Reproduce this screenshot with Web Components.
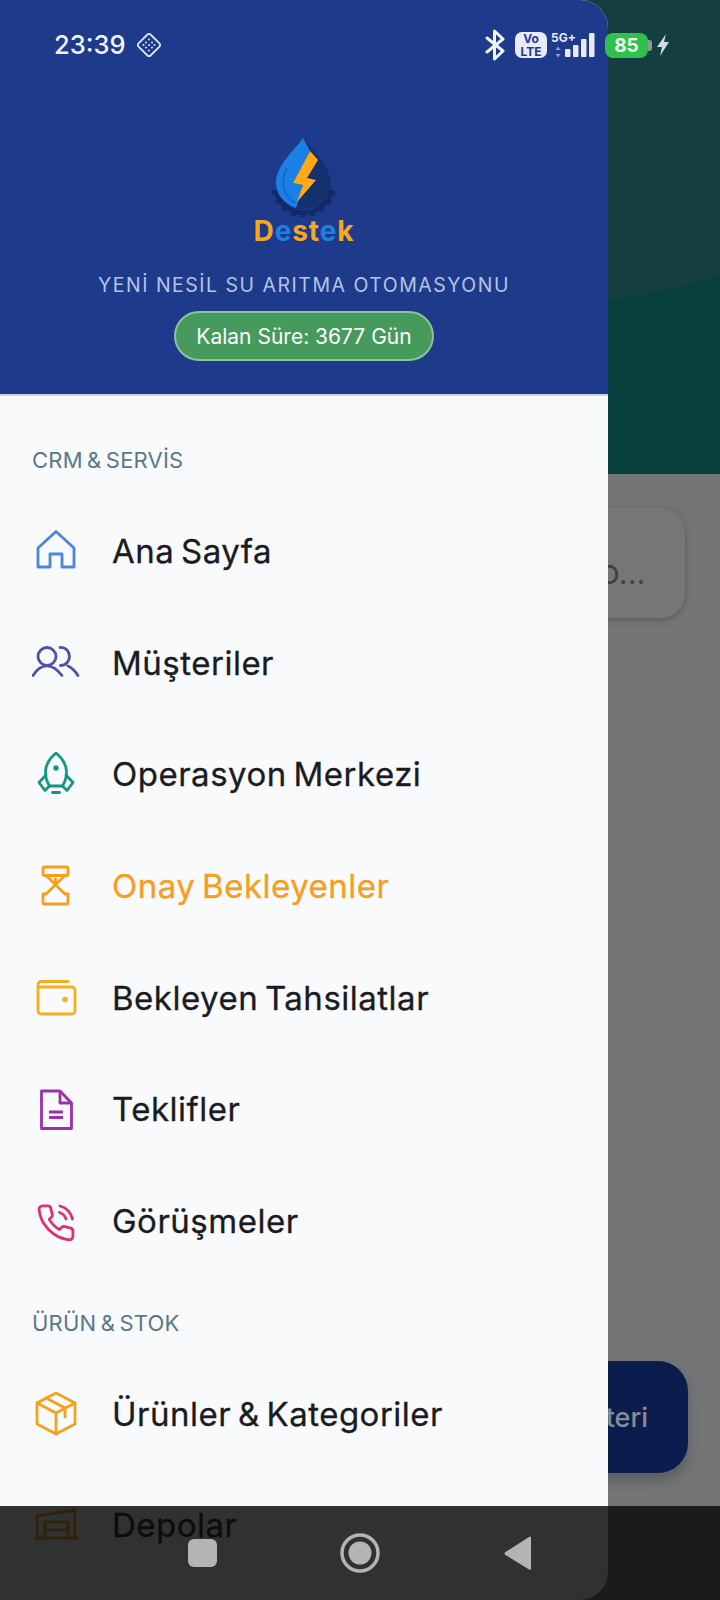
<!DOCTYPE html>
<html lang="tr">
<head>
<meta charset="utf-8">
<title>Destek</title>
<style>
  html, body { margin: 0; padding: 0; background: #747576; }
  body { font-family: "Inter", "Noto Sans", sans-serif; }
</style>
</head>
<body>

<app-screen>
  <back-page slot="page"></back-page>
  <side-drawer slot="drawer">
    <drawer-header slot="header"></drawer-header>

    <menu-section label="CRM &amp; SERVİS">
      <menu-item>
        <svg slot="icon" viewBox="0 0 48 48" fill="none" stroke="#4a86e0" stroke-width="2.8" stroke-linejoin="round"><path d="M6 40V21L24 4.5 42 21V40H30V27H18V40Z"/></svg>
        Ana Sayfa
      </menu-item>
      <menu-item>
        <svg slot="icon" viewBox="0 0 48 48" fill="none" stroke="#4a55a8" stroke-width="2.8" stroke-linecap="round"><circle cx="15" cy="17.500" r="9"/><path d="M1 36.500C5 30 10 26.800 15 26.800S25 30 30 36.500"/><path d="M28 8.500C34 8 37.500 12.500 37.500 17.500C37.500 22 34 26.500 28.500 26.500"/><path d="M36 27C40 29 43.500 32.500 46 36.500"/></svg>
        Müşteriler
      </menu-item>
      <menu-item>
        <svg slot="icon" viewBox="0 0 48 48" fill="none" stroke="#14967f" stroke-width="2.8" stroke-linecap="round" stroke-linejoin="round"><path d="M24 3C18 8 13.500 14 13.500 22C13.500 27 15 32 17.500 36H30.500C33 32 34.500 27 34.500 22C34.500 14 30 8 24 3Z"/><path d="M14 25L7 32.500L13 40.500L17.500 36"/><path d="M34 25L41 32.500L35 40.500L30.500 36"/><path d="M20.500 42.500H27.500"/><circle cx="24" cy="18" r="1.300" fill="#14967f"/></svg>
        Operasyon Merkezi
      </menu-item>
      <menu-item active>
        <svg slot="icon" viewBox="0 0 48 48" fill="none" stroke="#f59e1f" stroke-width="2.8" stroke-linejoin="round" stroke-linecap="round"><rect x="11" y="5" width="25" height="8.500" rx="1.500"/><path d="M14 13.500L33 32M33 13.500L14 32"/><path d="M23.500 17V23"/><path d="M14 32H11V40.500A1.500 1.500 0 0 0 12.500 42H34.500A1.500 1.500 0 0 0 36 40.500V32H33"/></svg>
        Onay Bekleyenler
      </menu-item>
      <menu-item>
        <svg slot="icon" viewBox="0 0 48 48" fill="none" stroke="#f2b01e" stroke-width="2.8" stroke-linejoin="round" stroke-linecap="round"><path d="M36 7.500H9A3 3 0 0 0 6 10.500V37A3 3 0 0 0 9 40H40A3 3 0 0 0 43 37V16A3 3 0 0 0 40 13H6"/><circle cx="33" cy="25.500" r="1.400" fill="#f2b01e"/></svg>
        Bekleyen Tahsilatlar
      </menu-item>
      <menu-item>
        <svg slot="icon" viewBox="0 0 48 48" fill="none" stroke="#9b30a8" stroke-width="2.8" stroke-linejoin="round" stroke-linecap="butt"><path d="M9.500 6H28L39.500 18V43.500H9.500Z"/><path d="M28 6V18H39.500"/><path d="M17 27H31M17 32.500H31"/></svg>
        Teklifler
      </menu-item>
      <menu-item>
        <svg slot="icon" viewBox="0 0 48 48" fill="none" stroke="#d9346f" stroke-width="2.8" stroke-linecap="round" stroke-linejoin="round"><g transform="translate(3.500 5.500) scale(1.700)" stroke-width="1.650"><path d="M22 16.920v3a2 2 0 0 1-2.180 2 19.790 19.790 0 0 1-8.630-3.070 19.500 19.500 0 0 1-6-6 19.790 19.790 0 0 1-3.070-8.670A2 2 0 0 1 4.110 2h3a2 2 0 0 1 2 1.720 12.840 12.840 0 0 0 .7 2.810 2 2 0 0 1-.45 2.110L8.090 9.910a16 16 0 0 0 6 6l1.270-1.270a2 2 0 0 1 2.110-.45 12.840 12.840 0 0 0 2.810.7A2 2 0 0 1 22 16.920z"/></g><path d="M28 9C34 10.500 38.500 15 40.500 22"/><path d="M27.500 15.500C30.500 16.500 33 19 34 22"/></svg>
        Görüşmeler
      </menu-item>
    </menu-section>

    <menu-section label="ÜRÜN &amp; STOK">
      <menu-item>
        <svg slot="icon" viewBox="0 0 48 48" fill="none" stroke="#f5a01f" stroke-width="2.8" stroke-linejoin="round" stroke-linecap="round"><path d="M24 3L43 13V34L24 44L5 34V13Z"/><path d="M5 13L24 23L43 13M24 23V44"/><path d="M14 8L33 18V27"/></svg>
        Ürünler &amp; Kategoriler
      </menu-item>
      <menu-item>
        <svg slot="icon" viewBox="0 0 48 48" fill="none" stroke="#f59e0b" stroke-width="2.8"><path d="M3 37H46M5 37V15L43 9V37"/><path d="M13 37V21H36V37M13 29H36"/></svg>
        Depolar
      </menu-item>
    </menu-section>
  </side-drawer>
  <status-bar slot="chrome"></status-bar>
  <nav-bar slot="chrome"></nav-bar>
</app-screen>

<script>
// small helper so each component can keep markup and styles together
function makeTemplate(html) {
    const t = document.createElement('template');
    t.innerHTML = html;
    return t;
}

class AppScreen extends HTMLElement {
    constructor() {
        super();
        this.attachShadow({mode: "open"}).appendChild(AppScreen.tpl.content.cloneNode(true));
    }
}
AppScreen.tpl = makeTemplate(`
    <style>
        :host { display: block; position: relative; width: 720px; height: 1600px; overflow: hidden; }
    </style>
    <slot name="page"></slot>
    <slot name="drawer"></slot>
    <slot name="chrome"></slot>
`);

// the dimmed page that sits behind the open drawer
class BackPage extends HTMLElement {
    constructor() {
        super();
        this.attachShadow({mode: "open"}).appendChild(BackPage.tpl.content.cloneNode(true));
    }
}
BackPage.tpl = makeTemplate(`
    <style>
        :host { display: flex; flex-direction: column; width: 720px; height: 1600px; background: #747576; }
        .hero { height: 474px; background: #07403c; position: relative; overflow: hidden; flex: none; }
        .hero::before {
            content: ""; position: absolute; left: 80px; top: -658px;
            width: 960px; height: 960px; border-radius: 50%; background: #143e3f;
        }
        .body { flex: 1; display: flex; flex-direction: column; align-items: flex-end; padding: 34px 35px 0 0; }
        .search {
            width: 300px; height: 110px; box-sizing: border-box; border-radius: 24px;
            background: #777676; box-shadow: 0 2px 6px rgba(40,40,45,.35);
            display: flex; align-items: center; justify-content: flex-end; padding: 22px 39px 0 0;
            color: #3f4044; font: 500 26px "Inter", sans-serif; letter-spacing: 1px;
        }
        .fab {
            margin: 743px -3px 0 0; width: 300px; height: 112px; box-sizing: border-box; border-radius: 30px;
            background: #0b1d4d; box-shadow: 0 8px 12px rgba(40,40,45,.3);
            display: flex; align-items: center; justify-content: flex-end; padding-right: 40px;
            color: #868b98; font: 500 27px "Inter", sans-serif;
        }
    </style>
    <div class="hero"></div>
    <div class="body">
        <div class="search">O...</div>
        <div class="fab">teri</div>
    </div>
`);

class SideDrawer extends HTMLElement {
    constructor() {
        super();
        this.attachShadow({mode: "open"}).appendChild(SideDrawer.tpl.content.cloneNode(true));
    }
}
SideDrawer.tpl = makeTemplate(`
    <style>
        :host {
            display: flex; flex-direction: column; position: absolute; left: 0; top: 0;
            width: 608px; height: 1600px; overflow: hidden;
            background: #f9fafc; border-radius: 0 28px 28px 0;
        }
        .list { padding-top: 18px; }
    </style>
    <slot name="header"></slot>
    <div class="list"><slot></slot></div>
`);

class DrawerHeader extends HTMLElement {
    constructor() {
        super();
        this.attachShadow({mode: "open"}).appendChild(DrawerHeader.tpl.content.cloneNode(true));
    }
}
DrawerHeader.tpl = makeTemplate(`
    <style>
        :host {
            display: flex; flex-direction: column; align-items: center; flex: none;
            border-bottom: 2px solid #cdd3e3; background: #1e3a8a;
            padding-top: 135px; height: 259px;
        }
        svg { display: block; width: 80px; height: 82px; }
        .brand { font: 700 28px/27px "Inter", sans-serif; color: #f5a623; margin-top: 1px; letter-spacing: .9px; }
        .brand b { color: #1a80e6; font-weight: 700; }
        .sub { margin-top: 28px; font: 400 19.5px/24px "Inter", sans-serif; letter-spacing: 1.5px; color: #b6c3e6; }
        .pill {
            margin-top: 14px; height: 50px; width: 260px; box-sizing: border-box; border-radius: 25px;
            background: #459a5c; border: 2px solid #8cc39e; color: #fff;
            display: flex; align-items: center; justify-content: center;
            font: 400 21px "Inter", sans-serif;
        }
    </style>
    <svg viewBox="265 135 80 82" aria-hidden="true">
        <g fill="none" stroke="#13296a">
            <path d="M277 190A28 28 0 0 0 332 190" stroke-width="5"/>
            <path d="M274 190A31 31 0 0 0 335 190" stroke-width="4" stroke-dasharray="5 5"/>
        </g>
        <path fill="#14306e" d="M306 140C316 152 332 168 332 185C332 199 320 209 304 209H296L306 185Z"/>
        <path fill="#1a80e6" d="M304 138C296 150 277 165 277 183C277 196 287 204 297 208L304 185L294 183L311 151C309 147 306 142 304 138Z"/>
        <path fill="none" stroke="#1565c0" stroke-width="1.500" d="M288 168C281 181 284 196 296 203"/>
        <path fill="#ffa81a" d="M311 151L319 160L308 178L317 180L298 202L304 185L294 183Z"/>
    </svg>
    <div class="brand">D<b>e</b>st<b>e</b>k</div>
    <div class="sub">YENİ NESİL SU ARITMA OTOMASYONU</div>
    <div class="pill">Kalan Süre: 3677 Gün</div>
`);

class MenuSection extends HTMLElement {
    constructor() {
        super();
        this.attachShadow({mode: "open"}).appendChild(MenuSection.tpl.content.cloneNode(true));
    }
    connectedCallback() {
        this.shadowRoot.querySelector('.label').textContent = this.getAttribute('label');
    }
}
MenuSection.tpl = makeTemplate(`
    <style>
        :host { display: block; padding-top: 32px; }
        .label {
            font: 400 22px/28px "Inter", sans-serif; color: #5a7887; word-spacing: -2px; letter-spacing: .2px;
            padding-left: 32px; margin-bottom: 21px;
        }
    </style>
    <div class="label"></div>
    <slot></slot>
`);

class MenuItem extends HTMLElement {
    constructor() {
        super();
        this.attachShadow({mode: "open"}).appendChild(MenuItem.tpl.content.cloneNode(true));
    }
}
MenuItem.tpl = makeTemplate(`
    <style>
        :host {
            display: flex; align-items: center; height: 111.7px; padding-left: 32px;
            font: 400 33px "Inter", sans-serif; color: #1a1c22; word-spacing: -3px; letter-spacing: .5px;
            -webkit-text-stroke: .3px currentColor;
        }
        :host([active]) { color: #f59e1f; }
        .icon { width: 48px; height: 48px; flex: none; margin-right: 32px; }
        ::slotted(svg) { display: block; width: 48px; height: 48px; }
    </style>
    <div class="icon"><slot name="icon"></slot></div>
    <slot></slot>
`);

class StatusBar extends HTMLElement {
    constructor() {
        super();
        this.attachShadow({mode: "open"}).appendChild(StatusBar.tpl.content.cloneNode(true));
    }
}
StatusBar.tpl = makeTemplate(`
    <style>
        :host {
            display: flex; align-items: center; position: absolute; left: 0; top: 28px; right: 0; height: 34px;
            padding: 0 50px 0 54px; box-sizing: border-box; color: #fff;
        }
        .time { font: 500 25.5px/34px "Inter", sans-serif; color: #f2f4fb; }
        .gem { width: 26px; height: 26px; margin-left: 11px; }
        .right { margin-left: auto; display: flex; align-items: center; }
        .bt { width: 22px; height: 32px; }
        .volte {
            width: 32px; height: 26px; margin-left: 9px; border-radius: 7px; background: #e8ecf8; color: #1e3a8a;
            font: 700 12px/13px "Inter", sans-serif; text-align: center; box-sizing: border-box;
        }
        .sig { position: relative; width: 44px; height: 26px; margin-left: 4px; }
        .sig span { position: absolute; left: 0; top: -1px; font: 700 12px/13px "Inter", sans-serif; color: #e8ecf8; }
        .sig svg { position: absolute; left: 0; top: 0; width: 44px; height: 26px; }
        .batt {
            width: 43px; height: 25px; margin-left: 10px; border-radius: 8px; background: #2ec24a;
            color: #f0fbf2; font: 700 19px/25px "Inter", sans-serif; text-align: center; position: relative;
        }
        .batt::after {
            content: ""; position: absolute; right: -4px; top: 7px; width: 4px; height: 11px;
            border-radius: 0 3px 3px 0; background: #8a9a9a;
        }
        .bolt { width: 14px; height: 22px; margin-left: 8px; }
    </style>
    <span class="time">23:39</span>
    <svg class="gem" viewBox="0 0 26 26" fill="none" stroke="#dfe5f5">
        <rect x="4.500" y="4.500" width="17" height="17" rx="2.500" transform="rotate(45 13 13)" stroke-width="1.800"/>
        <g fill="#dfe5f5" stroke="none">
            <circle cx="13" cy="7.500" r="1"/><circle cx="10" cy="10.500" r="1"/><circle cx="16" cy="10.500" r="1"/>
            <circle cx="7.500" cy="13" r="1"/><circle cx="13" cy="13" r="1"/><circle cx="18.500" cy="13" r="1"/>
            <circle cx="10" cy="15.500" r="1"/><circle cx="16" cy="15.500" r="1"/><circle cx="13" cy="18.500" r="1"/>
        </g>
    </svg>
    <div class="right">
        <svg class="bt" viewBox="0 0 22 32" fill="none" stroke="#f2f4fb" stroke-width="3" stroke-linejoin="round" stroke-linecap="round">
            <path d="M3 9L19 22L10.500 30V2L19 10L3 23"/>
        </svg>
        <div class="volte">Vo<br>LTE</div>
        <div class="sig">
            <span>5G+</span>
            <svg viewBox="0 0 44 26">
                <path d="M7 14.500L9.500 18H4.500ZM7 25.500L4.500 22H9.500Z" fill="#8f9fd0"/>
                <rect x="14" y="17" width="5.500" height="8" rx="1" fill="#e8ecf8"/>
                <rect x="22" y="13" width="5.500" height="12" rx="1" fill="#e8ecf8"/>
                <rect x="30" y="7" width="5.500" height="18" rx="1" fill="#e8ecf8"/>
                <rect x="38" y="1" width="5.500" height="24" rx="1" fill="#e8ecf8"/>
            </svg>
        </div>
        <div class="batt">85</div>
        <svg class="bolt" viewBox="0 0 14 22"><path d="M10 0L1 13H6L4 22L13 8H8Z" fill="#d5dede"/></svg>
    </div>
`);

class NavBar extends HTMLElement {
    constructor() {
        super();
        this.attachShadow({mode: "open"}).appendChild(NavBar.tpl.content.cloneNode(true));
    }
}
NavBar.tpl = makeTemplate(`
    <style>
        :host {
            display: block; position: absolute; left: 0; right: 0; bottom: 0; height: 94px;
            background: rgba(10,10,10,.84);
        }
        svg { display: block; width: 720px; height: 94px; }
    </style>
    <svg viewBox="0 1506 720 94" fill="#b4b4b4">
        <rect x="188" y="1539" width="29" height="28" rx="6"/>
        <circle cx="360" cy="1553" r="18" fill="none" stroke="#b4b4b4" stroke-width="3.500"/>
        <circle cx="360" cy="1553" r="11.500"/>
        <path d="M531 1537.500V1568.500Q531 1570.500 529 1569.500L505.500 1555Q503.500 1553.500 505.500 1552L529 1537Q531 1536 531 1537.500Z"/>
    </svg>
`);

customElements.define('app-screen', AppScreen);
customElements.define('back-page', BackPage);
customElements.define('side-drawer', SideDrawer);
customElements.define('drawer-header', DrawerHeader);
customElements.define('menu-section', MenuSection);
customElements.define('menu-item', MenuItem);
customElements.define('status-bar', StatusBar);
customElements.define('nav-bar', NavBar);
</script>
</body>
</html>
